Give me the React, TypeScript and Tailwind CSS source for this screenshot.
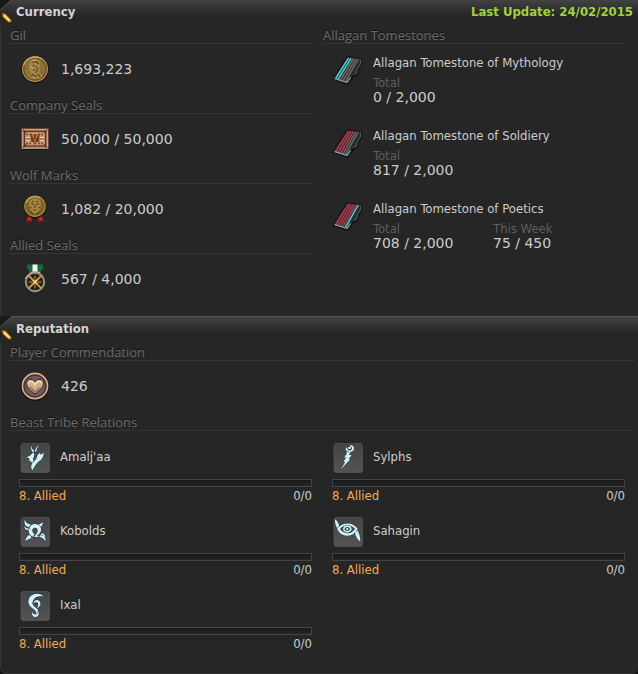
import type { ReactNode } from 'react';

interface Balance {
  label: string;
  value: string;
  icon: ReactNode;
}

interface Tomestone {
  name: string;
  total: string;
  week?: string;
  stripes: string[];
}

interface Tribe {
  id: string;
  name: string;
  glyph: ReactNode;
}

const RED = '#b5394a';
const CYAN = '#45d3d0';
const STEEL = '#6b6b68';

function GilIcon() {
  return (
    <svg viewBox="0 0 30 30" className="size-[30px]" aria-hidden="true">
      <circle cx="15" cy="15.6" r="13.8" fill="#15120f" />
      <circle cx="15" cy="15" r="12.4" fill="#6a4f22" stroke="#b2914f" strokeWidth="1.2" />
      <circle cx="15" cy="15" r="10.6" fill="#8d6f37" />
      <path d="M11 6.5c3-2.6 7.4-1.6 8.8 1.6 1 2.3.5 4.6-.6 6.5l.5 4.6 3 3.4c-4.2 3.4-11 3.2-14.4-.4l3-3.4c-.6-1.6-2.4-1.2-2.6-2.6l.7-1.2-1-2.4 1.4-2.4Z" fill="#a88849" />
      <path d="M12 8.5c3-1.600 5-.8 6.600 1.400M12.400 11.500l3 .8M16.400 12.500c1.800 2.200.8 5-.8 6.200M13 15.800l2 .6M17.600 19.600l2.600 3.200M10 22.600l3-2.400M12 20.500l5 2" fill="none" stroke="#55401d" strokeWidth="1.100" />
      <path d="M12.500 7l3-.8M11 13l1.500 1" stroke="#d3b575" strokeWidth="1" />
      <path d="M4 11C7 4 15 .8 22 5" fill="none" stroke="#dcc084" strokeWidth="1" />
    </svg>
  );
}

function SealIcon() {
  return (
    <svg viewBox="0 0 30 30" className="size-[30px]" aria-hidden="true">
      <rect x="1" y="4" width="28" height="22" fill="#1a1411" />
      <rect x="1.500" y="4.500" width="27" height="20.500" fill="#a9795c" />
      <rect x="2.500" y="5.500" width="25" height="18.500" fill="none" stroke="#c9a284" strokeWidth="1" />
      <rect x="4.500" y="7.500" width="21" height="14.500" fill="#c89a78" stroke="#573527" strokeWidth="1.200" />
      <path d="M6 10.500h6M18 10.500h6M6 19.500h6M18 19.500h6" stroke="#79492f" strokeWidth="1.400" strokeDasharray="2 1" />
      <path d="M6 13.500h5M19 13.500h5M6 16.500h5M19 16.500h5" stroke="#ebcaa8" strokeWidth="1.200" />
      <path d="M6 15h5M19 15h5" stroke="#8a573d" strokeWidth="1" />
      <path d="M11 9.500l2 1.500 2-1 2 1 2-1.500.500 4-1 2 1.500 2-3 .5L15 21l-2-3-3-.5 1.500-2-1-2Z" fill="#6d3b1d" />
      <path d="M12.500 11l1.500 3M17.500 11L16 14M15 15v4" stroke="#d88d3c" strokeWidth="1.200" />
      <path d="M3 6l3 3M27 6l-3 3M3 23.500l3-3M27 23.500l-3-3" stroke="#5b3526" strokeWidth="1.300" />
    </svg>
  );
}

function WolfIcon() {
  return (
    <svg viewBox="0 0 30 30" className="size-[30px]" aria-hidden="true">
      <path d="M9 20l-3.500 8 3.500-1.500 1.500 2.500L14 21ZM21 20l3.200 8-3.200-1.500-1.500 2.500L16 21Z" fill="#b5171a" />
      <path d="M8.500 25.500l2.500-3M21.500 25.500l-2.500-3" stroke="#e63c3a" strokeWidth="1.200" />
      <circle cx="15" cy="12.800" r="11.600" fill="#181411" />
      <circle cx="15" cy="12.200" r="10.200" fill="#7d6123" stroke="#a98a40" strokeWidth="1.200" />
      <path d="M9.500 7.500C11 5 13 4.500 15 4.500s4.500.5 5.500 3l1 4-1.500 3.500-2.500 4h-5L10 15l-1.500-3.500Z" fill="#a58743" />
      <path d="M11 9.500l3 1M19 9.500l-3 1M13 16h4M15 11v3M11 18l2 2M19 18l-2 2M12 7l1.500 1M18 7l-1.500 1M9.500 13l2 1M20.500 13l-2 1" stroke="#584018" strokeWidth="1.100" />
      <path d="M6 9C8.500 3.500 14 1 20 4" fill="none" stroke="#d8bc72" strokeWidth="1" />
    </svg>
  );
}

function AlliedIcon() {
  return (
    <svg viewBox="0 0 30 30" className="size-[30px]" aria-hidden="true">
      <path d="M7 .5h16v4l-3 4H10l-3-4Z" fill="#14683e" />
      <path d="M12.500.5h5v8h-5Z" fill="#eef3ee" />
      <circle cx="15" cy="18.500" r="11" fill="#191715" />
      <circle cx="15" cy="18" r="9.200" fill="#1a1713" stroke="#8d8981" strokeWidth="2.400" />
      <path d="M5.500 15a10.400 10.400 0 0 1 15-6" fill="none" stroke="#cfccc4" strokeWidth="1" />
      <path d="M15 11.500v13M8.500 18h13" stroke="#7d5b22" strokeWidth="2.400" strokeDasharray="4 5" />
      <path d="M8 11l13.500 13.500M22 11L8.500 24.500" stroke="#c2963f" strokeWidth="2" />
      <path d="M13 16l4 4M17 16l-4 4" stroke="#f1d27c" strokeWidth="1.400" />
    </svg>
  );
}

function HeartIcon() {
  return (
    <svg viewBox="0 0 30 30" className="size-[30px]" aria-hidden="true">
      <circle cx="15" cy="15.600" r="14.200" fill="#171210" />
      <circle cx="15" cy="15" r="12.600" fill="#604348" stroke="#cdb58f" strokeWidth="1.600" />
      <circle cx="15" cy="15" r="10.800" fill="#76565a" stroke="#46302e" strokeWidth="1" />
      <path d="M15 23C11 19.600 6.500 16.400 6.500 12.400c0-4.400 6-5.600 8.500-1.600 2.500-4 8.500-2.800 8.500 1.600 0 4-4.500 7.200-8.500 10.600Z" fill="#cbb088" stroke="#3a2320" strokeWidth="1" />
      <path d="M8.600 12.500c.4-2.500 3.600-2.800 5-.4L15 14l2-2.600c1.500-1.800 3.900-1 4.300.8" fill="none" stroke="#f3e6bd" strokeWidth="1.300" />
      <path d="M10 16l5 4.800 4.500-4" fill="none" stroke="#957055" strokeWidth="1.400" />
    </svg>
  );
}

function TomestoneIcon({ stripes }: { stripes: string[] }) {
  return (
    <svg viewBox="0 0 30 30" className="size-[30px]" aria-hidden="true">
      <path d="M14 1L29 3.500v6l-3.500 6.500v3.500l-5 3L15 30 0 25v-2.500Z" fill="#121212" />
      <path d="M14.800 2L28 4v4.500l-3.800 6.500-.4 3.500-4 2L14.500 28 1.200 24v-2Z" fill="#292a2c" />
      {stripes.map((color, i) => (
        <line
          key={i}
          x1={15.6 + i * 2.4}
          y1={2.8 + i * 0.35}
          x2={3 + i * 2.4}
          y2={23 + i * 0.8}
          stroke={color}
          strokeWidth="1.5"
        />
      ))}
      <path d="M1.500 23.500L14 27.400l3.500-5" fill="none" stroke="#8f93a0" strokeWidth="1.400" />
      <path d="M27.500 4.500v4L24 14.500l-.5 3.500-3 1.500" fill="none" stroke="#53555a" strokeWidth="1.200" />
    </svg>
  );
}

const balances: Balance[] = [
  { label: 'Gil', value: '1,693,223', icon: <GilIcon /> },
  { label: 'Company Seals', value: '50,000 / 50,000', icon: <SealIcon /> },
  { label: 'Wolf Marks', value: '1,082 / 20,000', icon: <WolfIcon /> },
  { label: 'Allied Seals', value: '567 / 4,000', icon: <AlliedIcon /> },
];

const tomestones: Tomestone[] = [
  { name: 'Allagan Tomestone of Mythology', total: '0 / 2,000', stripes: [CYAN, CYAN, STEEL, STEEL, STEEL] },
  { name: 'Allagan Tomestone of Soldiery', total: '817 / 2,000', stripes: [RED, RED, RED, STEEL, STEEL] },
  { name: 'Allagan Tomestone of Poetics', total: '708 / 2,000', week: '75 / 450', stripes: [RED, RED, RED, RED, CYAN] },
];

// glyphs are drawn on a 90x90 grid
const tribes: Tribe[] = [
  {
    id: 'amaljaa',
    name: "Amalj'aa",
    glyph: (
      <>
        <path d="M17 43C25 42 34 36 41 26c3 8 2 16-3 23l3 3-4 12c-2-8-5-11-10-11 3-5 2-9-10-10Z" />
        <path d="M71 28c1 14-6 23-17 29-6 6-10 14-17 25-4-6-5-13-1-20 4-6 11-10 14-17 1-8 4-12 10-16l2 6c4-1 6-3 9-7Z" />
        <path d="M33 5c1 8 4 13 9 18l-2 7C34 23 31 14 33 5ZM59 5C51 10 46 16 44 25l5 2c0-8 3-15 10-22Z" />
      </>
    ),
  },
  {
    id: 'sylphs',
    name: 'Sylphs',
    glyph: (
      <>
        <path fillRule="evenodd" d="M51 7c8-1 13 4 12 10-1 8-10 12-18 9-8-2-9-9-4-13l3 4c-1 3 1 4 4 5 5 1 9-2 9-6 0-3-3-4-7-3Z" />
        <path d="M45 13c4-3 9-2 9 1s-5 5-8 3Z" />
        <path d="M37 24c6 4 11 5 17 4l-7 9 10-2-10 13 5 1-30 32 15-25-6 1 9-14-7 1 9-13Z" />
      </>
    ),
  },
  {
    id: 'kobolds',
    name: 'Kobolds',
    glyph: (
      <>
        <path d="M15 6c1 11 6 14 17 16l-5 8C15 29 11 18 15 6ZM71 16l-8 15-9-6c5-5 11-5 17-9ZM15 72c3-9 6-15 13-19l7 8c-5 6-12 7-20 11ZM76 74c-3-9-8-12-19-14l7-8c11 4 15 12 12 22Z" />
        <path fillRule="evenodd" d="M45 21c12 0 20 9 18 20-2 8-7 12-12 14l6 6-16-2c6-5 11-10 12-17 1-6-3-10-8-10s-9 4-8 10c1 5 4 8 7 10l-6 7c-8-4-13-10-12-19 1-11 9-19 19-19Z" />
        <path d="M12 27c5 6 9 8 16 8l-4 5c-7-1-11-6-12-13ZM77 62c-4-6-8-8-15-9l4-5c7 2 10 7 11 14Z" />
      </>
    ),
  },
  {
    id: 'sahagin',
    name: 'Sahagin',
    glyph: (
      <>
        <path d="M6 6c8 7 12 15 14 26l-2 9C10 33 5 22 6 6ZM82 74c-9-6-14-14-16-25l4-14c9 12 13 24 12 39Z" />
        <path fillRule="evenodd" d="M12 35c17-20 46-22 62 0-3 7-13 22-33 21-14-1-23-9-29-21Zm9 1c11 15 33 18 45 0-13-15-32-14-45 0Z" />
        <path fillRule="evenodd" d="M43 25a13 11 0 1 0 .1 0Zm0 5a8 6 0 1 1-.1 0Z" />
        <circle cx="43" cy="36" r="3.500" />
      </>
    ),
  },
  {
    id: 'ixal',
    name: 'Ixal',
    glyph: (
      <>
        <path d="M72 17C61 5 38 5 29 19c-7 11-4 24 6 31 8 5 15 10 13 18l7 2c4-10-2-16-9-21-8-6-11-12-7-20 5-11 17-15 33-12Z" />
        <path d="M39 38c2-9 11-14 18-9 8 6 5 18-6 22 3-6 5-10 3-14-3-5-9-4-15 1Z" />
        <path d="M35 62c-1 11 7 18 15 15 7-3 8-11 5-18-1 7-3 11-8 11-5 1-8-3-12-8Z" />
      </>
    ),
  },
];

function PanelHeader({ title, note }: { title: string; note?: string }) {
  return (
    <header className="flex h-[27px] items-start overflow-hidden bg-[#191919]">
      <svg viewBox="0 0 12 27" className="h-[27px] w-3 shrink-0" aria-hidden="true">
        <defs>
          <linearGradient id={`cut-${title}`} x1="0" y1="0" x2="0" y2="27" gradientUnits="userSpaceOnUse">
            <stop offset="0" stopColor="#424242" />
            <stop offset=".6" stopColor="#262626" />
          </linearGradient>
        </defs>
        <path d="M12 0L0 11v16h12Z" fill={`url(#cut-${title})`} />
        <path d="M12 .5L.5 11" fill="none" stroke="#555" strokeWidth="1" />
        <path d="M2.500 14.500L3 18l5.500 5h2.500v-2L5.500 15Z" fill="#f9c52f" stroke="#8f5b0c" strokeWidth="1" />
        <path d="M4 16.500l5.500 5" stroke="#ffe978" strokeWidth="1.600" />
      </svg>
      <div className="flex h-full grow items-start justify-between border-t border-[#555] bg-linear-to-b from-[#424242] to-[#262626] to-60% pr-[5px] pl-1 text-[13px] leading-6 font-bold">
        <h2 className="text-[#d4d4d4]">{title}</h2>
        {note && <p className="text-[#9ed33d]">{note}</p>}
      </div>
    </header>
  );
}

function SectionTitle({ children }: { children: ReactNode }) {
  return (
    <h3 className="h-[18px] border-b border-[#343434] pl-px font-['Open_Sans',sans-serif] text-[13px] leading-[18px] text-[#6c6c6c] [text-shadow:0_-1px_0_#111]">
      {children}
    </h3>
  );
}

function BalanceRow({ icon, value }: { icon: ReactNode; value: string }) {
  return (
    <div className="flex h-[52px] items-center gap-[11px] pb-0.5 pl-[11px]">
      {icon}
      <p className="font-['DejaVu_Sans',sans-serif] text-sm text-[#ccc]">{value}</p>
    </div>
  );
}

function Amount({ label, value }: { label: string; value: string }) {
  return (
    <div className="w-[120px]">
      <dt className="text-[13px] leading-[15px] text-[#5e5e5e]">{label}</dt>
      <dd className="font-['DejaVu_Sans',sans-serif] text-sm leading-[15px] text-[#ccc]">{value}</dd>
    </div>
  );
}

function TribeCard({ id, name, glyph }: Tribe) {
  return (
    <li>
      <div className="flex gap-2.5 pl-px">
        <svg viewBox="0 0 90 90" className="size-[30px]" aria-hidden="true">
          <defs>
            <linearGradient id={`tile-${id}`} x1="0" y1="0" x2="0" y2="1">
              <stop offset="0" stopColor="#444" />
              <stop offset="1" stopColor="#545454" />
            </linearGradient>
          </defs>
          <rect x="3" y="1" width="86" height="88" rx="9" fill={`url(#tile-${id})`} stroke="#5a5a5a" strokeWidth="2" />
          <g fill="#d3f1fa" stroke="#1c2f38" strokeWidth="3" paintOrder="stroke">
            {glyph}
          </g>
        </svg>
        <h4 className="text-[13px] leading-7 text-[#ccc]">{name}</h4>
      </div>
      <div
        role="progressbar"
        aria-label={name}
        aria-valuenow={0}
        className="mt-1.5 h-2 border border-[#444] bg-linear-to-b from-[#191919] to-[#262626]"
      />
      <div className="flex justify-between text-[13px] leading-[18px]">
        <span className="text-[#f3ad4f]">8. Allied</span>
        <span className="text-[#ccc]">0/0</span>
      </div>
    </li>
  );
}

export default function App() {
  return (
    <div className="min-h-screen overflow-hidden bg-[#111]">
      <main className="-mt-px rounded-b-md border-b border-[#333] bg-[#262626] pb-5 font-['DejaVu_Sans_Condensed','DejaVu_Sans',sans-serif] shadow-[inset_1px_0_0_#333]">
        <section>
          <PanelHeader title="Currency" note="Last Update: 24/02/2015" />
          <div className="grid grid-cols-2 gap-2.5 pr-[13px] pl-[9px]">
            <div>
              {balances.map((item) => (
                <div key={item.label}>
                  <SectionTitle>{item.label}</SectionTitle>
                  <BalanceRow icon={item.icon} value={item.value} />
                </div>
              ))}
            </div>
            <div>
              <SectionTitle>Allagan Tomestones</SectionTitle>
              <ul className="pt-[11px]">
                {tomestones.map((stone) => (
                  <li key={stone.name} className="flex h-[73px] gap-2.5 pl-[11px]">
                    <TomestoneIcon stripes={stone.stripes} />
                    <div>
                      <h4 className="text-[13px] leading-4 text-[#ccc]">{stone.name}</h4>
                      <dl className="flex pt-1">
                        <Amount label="Total" value={stone.total} />
                        {stone.week && <Amount label="This Week" value={stone.week} />}
                      </dl>
                    </div>
                  </li>
                ))}
              </ul>
            </div>
          </div>
        </section>

        <section className="mt-2.5">
          <PanelHeader title="Reputation" />
          <div className="pr-1 pl-[9px]">
            <SectionTitle>Player Commendation</SectionTitle>
            <BalanceRow icon={<HeartIcon />} value="426" />
            <SectionTitle>Beast Tribe Relations</SectionTitle>
          </div>
          <ul className="grid grid-cols-2 gap-x-5 gap-y-3 pt-3 pr-[13px] pl-[19px]">
            {tribes.map((tribe) => (
              <TribeCard key={tribe.id} {...tribe} />
            ))}
          </ul>
        </section>
      </main>
    </div>
  );
}
